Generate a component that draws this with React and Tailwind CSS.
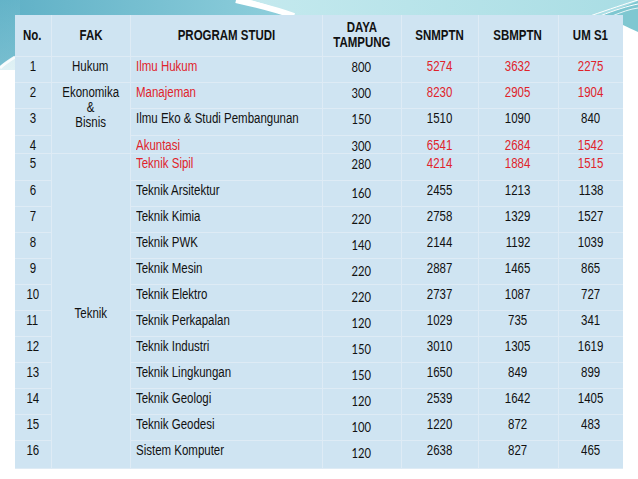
import React from "react";

const rows = [
  { no: "1", prog: "Ilmu Hukum", d: "800", a: "5274", b: "3632", c: "2275", red: true, h: 26 },
  { no: "2", prog: "Manajeman", d: "300", a: "8230", b: "2905", c: "1904", red: true, h: 26 },
  { no: "3", prog: "Ilmu Eko & Studi Pembangunan", d: "150", a: "1510", b: "1090", c: "840", h: 27 },
  { no: "4", prog: "Akuntasi", d: "300", a: "6541", b: "2684", c: "1542", red: true, h: 18 },
  { no: "5", prog: "Teknik Sipil", d: "280", a: "4214", b: "1884", c: "1515", red: true, h: 27 },
  { no: "6", prog: "Teknik Arsitektur", d: "160", a: "2455", b: "1213", c: "1138", h: 26, low: true },
  { no: "7", prog: "Teknik Kimia", d: "220", a: "2758", b: "1329", c: "1527", h: 26, low: true },
  { no: "8", prog: "Teknik PWK", d: "140", a: "2144", b: "1192", c: "1039", h: 26, low: true },
  { no: "9", prog: "Teknik Mesin", d: "220", a: "2887", b: "1465", c: "865", h: 26, low: true },
  { no: "10", prog: "Teknik Elektro", d: "220", a: "2737", b: "1087", c: "727", h: 26, low: true },
  { no: "11", prog: "Teknik Perkapalan", d: "120", a: "1029", b: "735", c: "341", h: 26, low: true },
  { no: "12", prog: "Teknik Industri", d: "150", a: "3010", b: "1305", c: "1619", h: 26, low: true },
  { no: "13", prog: "Teknik Lingkungan", d: "150", a: "1650", b: "849", c: "899", h: 26, low: true },
  { no: "14", prog: "Teknik Geologi", d: "120", a: "2539", b: "1642", c: "1405", h: 26, low: true },
  { no: "15", prog: "Teknik Geodesi", d: "100", a: "1220", b: "872", c: "483", h: 26, low: true },
  { no: "16", prog: "Sistem Komputer", d: "120", a: "2638", b: "827", c: "465", h: 28, low: true },
];

const fak = {
  0: { text: ["Hukum"], span: 1, align: "align-top pt-[2px]" },
  1: { text: ["Ekonomika", "&", "Bisnis"], span: 3, align: "align-top pt-[2px]" },
  4: { text: ["Teknik"], span: 12, align: "align-middle pt-[6px]" },
};

function N({ children, left }) {
  return (
    <span
      className={`inline-block whitespace-nowrap scale-x-[0.82] ${left ? "origin-left" : "origin-center"}`}
    >
      {children}
    </span>
  );
}

function Background() {
  return (
    <svg className="absolute inset-0" width="638" height="479" viewBox="0 0 638 479">
      <defs>
        <linearGradient id="tl" x1="0" y1="0" x2="1" y2="0">
          <stop offset="0" stopColor="#5fb0c6" />
          <stop offset="1" stopColor="#8fcfdc" />
        </linearGradient>
        <linearGradient id="tr" x1="0" y1="0" x2="1" y2="0">
          <stop offset="0" stopColor="#c4e9ee" />
          <stop offset="1" stopColor="#a9dde4" />
        </linearGradient>
        <linearGradient id="lv" x1="0" y1="0" x2="0" y2="1">
          <stop offset="0" stopColor="#6cb9cc" />
          <stop offset="1" stopColor="#a6d8e2" />
        </linearGradient>
      </defs>
      <path d="M250,0 H638 V16 H296 C282,10 266,4 250,0 Z" fill="url(#tr)" />
      <path d="M0,0 H236 C256,5 276,10 292,16 H15 V56 C10,59 5,62 0,66 Z" fill="url(#tl)" />
      <path d="M0,0 H20 V70 H0 Z" fill="url(#lv)" opacity="0.35" />
      <path d="M236,0 C258,5 278,10 294,16" stroke="#ffffff" strokeWidth="6" fill="none" />
      <path d="M0,68 C5,63 10,60 15,57" stroke="#ffffff" strokeWidth="3" fill="none" opacity="0.8" />
      <path d="M600,16 C615,10 628,5 638,1 V32 C632,29 627,27 623,25 V16 Z" fill="#7fc7d1" />
      <path d="M590,16 C610,9 625,4 638,0" stroke="#ffffff" strokeWidth="1" fill="none" />
      <path d="M600,16 C615,10 628,6 638,4" stroke="#ffffff" strokeWidth="1" fill="none" />
      <path d="M612,16 C622,12 630,9 638,8" stroke="#e9f6f8" strokeWidth="1" fill="none" />
    </svg>
  );
}

export default function App() {
  const narrow = { fontFamily: '"Liberation Sans", Arial, sans-serif' };
  const cell = "border border-[#deebf5] p-0 overflow-visible";
  return (
    <div className="relative w-[638px] h-[479px] bg-white overflow-hidden" style={narrow}>
      <Background />
      <div className="relative pt-[15px] pl-[15px]">
        <table className="border-collapse bg-[#cfe4f2] text-[14px] leading-[15px] text-[#111] table-fixed w-[608px]">
          <colgroup>
            <col className="w-[36px]" />
            <col className="w-[79px]" />
            <col className="w-[192px]" />
            <col className="w-[79px]" />
            <col className="w-[77px]" />
            <col className="w-[80px]" />
            <col className="w-[65px]" />
          </colgroup>
          <thead>
            <tr className="h-[41px] font-bold text-[14px]">
              <th className={`${cell} border-t-0 border-l-0 align-middle text-center`}><N>No.</N></th>
              <th className={`${cell} border-t-0 align-middle text-center`}><N>FAK</N></th>
              <th className={`${cell} border-t-0 align-middle text-center`}><N>PROGRAM STUDI</N></th>
              <th className={`${cell} border-t-0 align-middle text-center`}>
                <N>
                  DAYA
                  <br />
                  TAMPUNG
                </N>
              </th>
              <th className={`${cell} border-t-0 align-middle text-center`}><N>SNMPTN</N></th>
              <th className={`${cell} border-t-0 align-middle text-center`}><N>SBMPTN</N></th>
              <th className={`${cell} border-t-0 border-r-0 align-middle text-center`}><N>UM S1</N></th>
            </tr>
          </thead>
          <tbody>
            {rows.map((r, i) => {
              const f = fak[i];
              const col = r.red ? "text-[#e0232b]" : "text-[#111]";
              return (
                <tr key={r.no} style={{ height: r.h }}>
                  <td className={`${cell} border-l-0 align-top pt-[2px] text-center`}><N>{r.no}</N></td>
                  {f && (
                    <td rowSpan={f.span} className={`${cell} ${f.align} text-center`}>
                      {f.text.map((t) => (
                        <div key={t}><N>{t}</N></div>
                      ))}
                    </td>
                  )}
                  <td className={`${cell} align-top pt-[2px] pl-[5px] text-left ${col}`}>
                    <N left>{r.prog}</N>
                  </td>
                  <td
                    className={`${cell} align-top ${r.low ? "pt-[4px]" : "pt-[2px]"} text-center text-[14px]`}
                    style={{ fontFamily: 'Lato, "Open Sans", sans-serif' }}
                  >
                    <span className="inline-block whitespace-nowrap scale-x-[0.8]">{r.d}</span>
                  </td>
                  <td className={`${cell} align-top pt-[2px] text-center ${col}`}><N>{r.a}</N></td>
                  <td className={`${cell} align-top pt-[2px] text-center ${col}`}><N>{r.b}</N></td>
                  <td className={`${cell} border-r-0 align-top pt-[2px] text-center ${col}`}><N>{r.c}</N></td>
                </tr>
              );
            })}
          </tbody>
        </table>
      </div>
    </div>
  );
}
